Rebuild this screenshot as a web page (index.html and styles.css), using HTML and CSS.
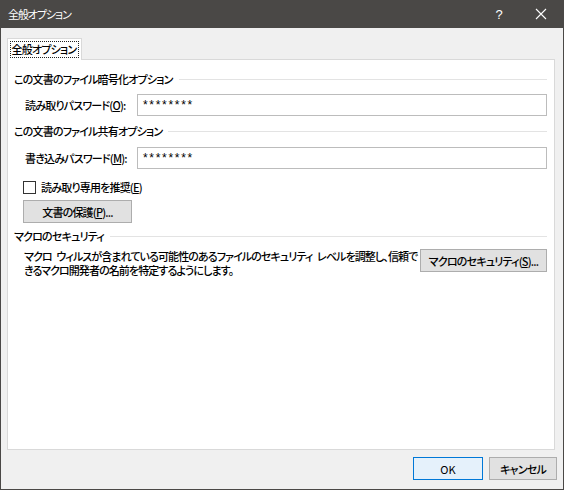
FILE: index.html
```html
<!DOCTYPE html>
<html lang="ja">
<head>
<meta charset="utf-8">
<title>全般オプション</title>
<link rel="stylesheet" href="styles.css">
</head>
<body>
<div class="window">
  <div class="titlebar">
    <span class="title">全般オプション</span>
    <span class="help">?</span>
    <span class="close"><svg width="12" height="12" viewBox="0 0 12 12"><path d="M1 1 L11 11 M11 1 L1 11" stroke="#ffffff" stroke-width="1.1" fill="none"/></svg></span>
  </div>
  <div class="content">
    <div class="tabs">
      <div class="tab"><span class="focus">全般オプション</span></div>
    </div>
    <div class="panel">
      <div class="group-title g1">この文書のファイル暗号化オプション</div>
      <div class="field-row r1">
        <span class="label">読み取りパスワード(<u>O</u>):</span>
        <div class="input">********</div>
      </div>
      <div class="group-title g2">この文書のファイル共有オプション</div>
      <div class="field-row r2">
        <span class="label">書き込みパスワード(<u>M</u>):</span>
        <div class="input">********</div>
      </div>
      <div class="check-row">
        <span class="checkbox"></span>
        <span>読み取り専用を推奨(<u>E</u>)</span>
      </div>
      <div class="btn-row">
        <div class="btn protect">文書の保護(<u>P</u>)...</div>
      </div>
      <div class="group-title g3">マクロのセキュリティ</div>
      <div class="macro-row">
        <div class="desc">マクロ&ensp;ウィルスが含まれている可能性のあるファイルのセキュリティ&ensp;レベルを調整し、信頼で<br>きるマクロ開発者の名前を特定するようにします。</div>
        <div class="btn macro">マクロのセキュリティ(<u>S</u>)...</div>
      </div>
    </div>
    <div class="footer">
      <div class="btn ok">OK</div>
      <div class="btn cancel">キャンセル</div>
    </div>
  </div>
</div>
</body>
</html>
```
FILE: styles.css
```css
html, body {
  margin: 0;
  padding: 0;
  background: #f0f0f0;
}
body {
  font-family: "Noto Sans CJK JP", "Noto Sans", sans-serif;
  font-size: 11px;
  font-weight: 500;
  letter-spacing: -0.8px;
  font-feature-settings: "palt";
  color: #000;
  white-space: nowrap;
}
u { text-decoration: underline; text-underline-offset: 1px; }
.window {
  width: 564px;
  height: 490px;
  box-sizing: border-box;
  display: flex;
  flex-direction: column;
  border: 1px solid #4a4846;
  border-top: none;
  background: #f0f0f0;
}
.titlebar {
  height: 28px;
  flex: none;
  background: #4a4846;
  color: #fff;
  display: flex;
  align-items: center;
  margin: 0 -1px;
  padding-left: 8px;
}
.title { flex: 1; line-height: 16px; letter-spacing: -1.1px; font-weight: 400; }
.help {
  width: 46px;
  text-align: center;
  font-family: "Liberation Sans", sans-serif;
  font-size: 13px;
  letter-spacing: 0;
  margin-right: -4px;
}
.close {
  width: 46px;
  display: flex;
  justify-content: center;
  align-items: center;
}
.content {
  flex: 1;
  display: flex;
  flex-direction: column;
  padding: 10px 8px 0 6px;
}
.tabs {
  display: flex;
  position: relative;
  z-index: 1;
  margin-bottom: -1px;
}
.tab {
  height: 22px;
  box-sizing: border-box;
  width: 75px;
  background: #fff;
  border: 1px solid #d9d9d9;
  border-bottom: none;
  display: flex;
  align-items: center;
  justify-content: center;
}
.focus {
  outline: 1px dotted #222;
  padding: 0 2px 0 1px;
  line-height: 15px;
}
.panel {
  flex: 1;
  background: #fff;
  border: 1px solid #d9d9d9;
  padding: 11px 7px 0 6px;
  display: flex;
  flex-direction: column;
}
.group-title {
  display: flex;
  align-items: center;
  gap: 6px;
  line-height: 16px;
}
.group-title::after {
  content: "";
  flex: 1;
  height: 1px;
  background: #e3e3e3;
}
.g2 { margin-top: 7px; }
.g3 { margin-top: 5px; }
.field-row {
  display: flex;
  align-items: center;
  padding-left: 11px;
  margin-top: 7px;
}
.r2 { margin-top: 8px; }
.label {
  width: 112px;
  flex: none;
}
.input {
  flex: 1;
  height: 22px;
  box-sizing: border-box;
  border: 1px solid #bcbcbc;
  padding-left: 5px;
  line-height: 21px;
  font-family: "Liberation Sans", sans-serif;
  font-size: 12px;
  font-weight: 400;
  letter-spacing: 1.7px;
}
.check-row {
  display: flex;
  align-items: center;
  gap: 5px;
  padding-left: 9px;
  margin-top: 10px;
  line-height: 16px;
}
.checkbox {
  width: 11px;
  height: 11px;
  border: 1px solid #333;
  background: #fff;
}
.btn-row {
  display: flex;
  padding-left: 9px;
  margin-top: 5px;
}
.btn {
  height: 23px;
  box-sizing: border-box;
  background: #e1e1e1;
  border: 1px solid #adadad;
  display: flex;
  align-items: center;
  justify-content: center;
}
.protect { width: 109px; }
.macro-row {
  display: flex;
  align-items: flex-start;
  margin-top: 5px;
  padding-left: 10px;
}
.desc {
  flex: 1;
  line-height: 14px;
  letter-spacing: -0.9px;
}
.macro { width: 127px; flex: none; }
.footer {
  height: 39px;
  box-sizing: border-box;
  flex: none;
  display: flex;
  justify-content: flex-end;
  gap: 6px;
  padding-top: 7px;
  margin-right: -2px;
}
.ok {
  width: 70px;
  background: #e5f1fb;
  border: 1px solid #0078d7;
  letter-spacing: 0;
  font-weight: 400;
}
.cancel { width: 68px; }
```
